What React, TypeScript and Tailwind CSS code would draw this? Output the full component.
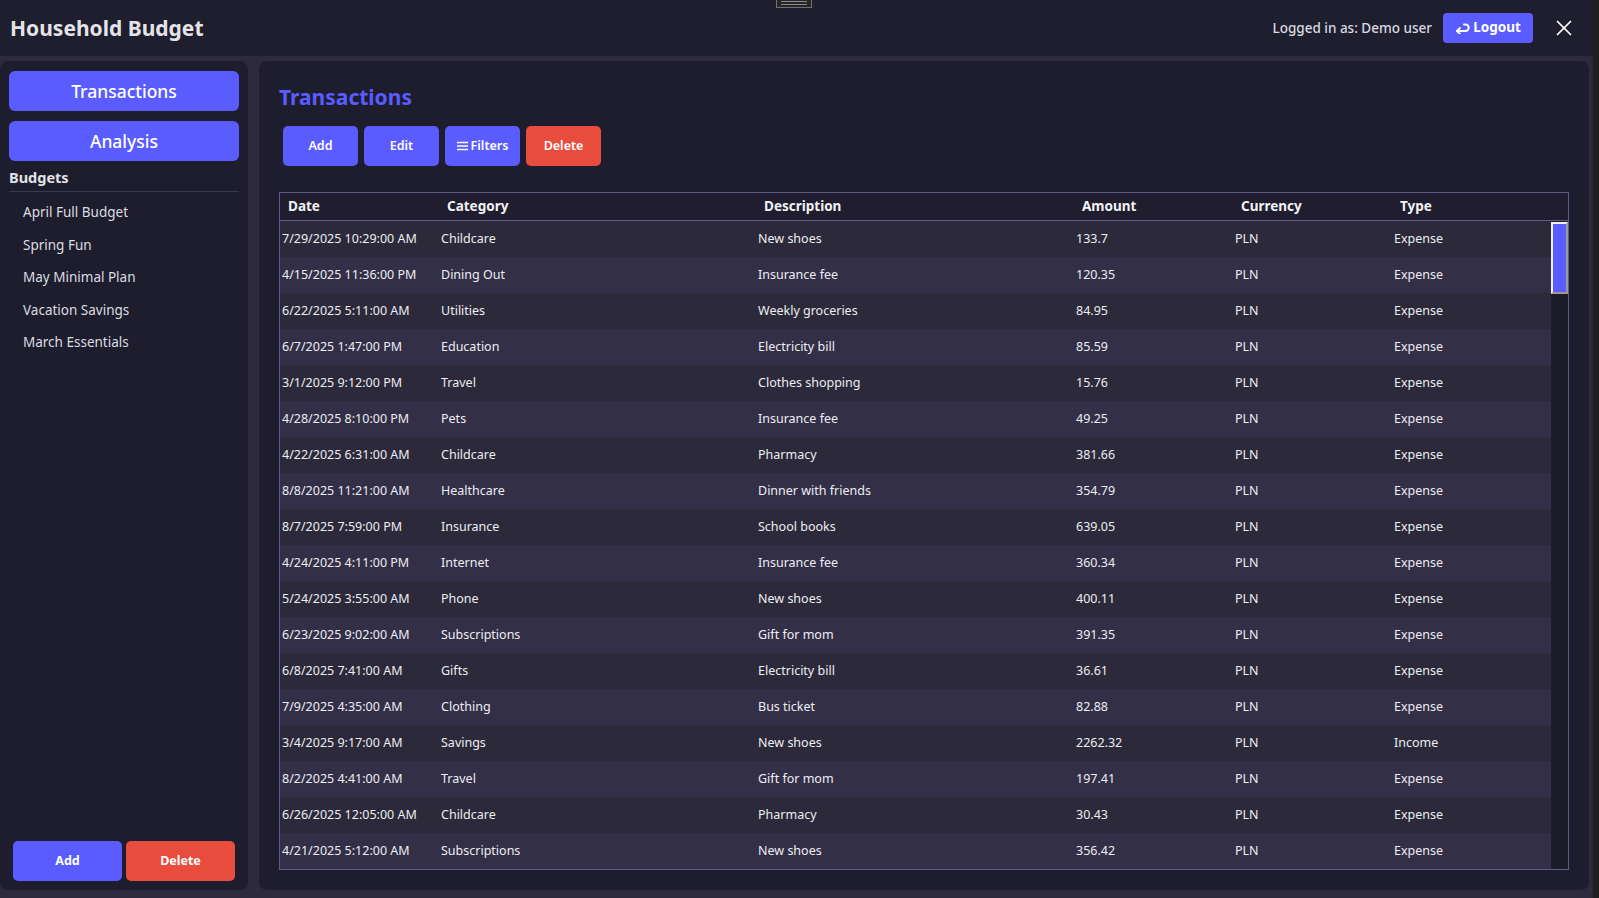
import { X } from 'lucide-react';

const budgets = ['April Full Budget', 'Spring Fun', 'May Minimal Plan', 'Vacation Savings', 'March Essentials'];

const rows: [string, string, string, string, string][] = [
  ['7/29/2025 10:29:00 AM', 'Childcare', 'New shoes', '133.7', 'Expense'],
  ['4/15/2025 11:36:00 PM', 'Dining Out', 'Insurance fee', '120.35', 'Expense'],
  ['6/22/2025 5:11:00 AM', 'Utilities', 'Weekly groceries', '84.95', 'Expense'],
  ['6/7/2025 1:47:00 PM', 'Education', 'Electricity bill', '85.59', 'Expense'],
  ['3/1/2025 9:12:00 PM', 'Travel', 'Clothes shopping', '15.76', 'Expense'],
  ['4/28/2025 8:10:00 PM', 'Pets', 'Insurance fee', '49.25', 'Expense'],
  ['4/22/2025 6:31:00 AM', 'Childcare', 'Pharmacy', '381.66', 'Expense'],
  ['8/8/2025 11:21:00 AM', 'Healthcare', 'Dinner with friends', '354.79', 'Expense'],
  ['8/7/2025 7:59:00 PM', 'Insurance', 'School books', '639.05', 'Expense'],
  ['4/24/2025 4:11:00 PM', 'Internet', 'Insurance fee', '360.34', 'Expense'],
  ['5/24/2025 3:55:00 AM', 'Phone', 'New shoes', '400.11', 'Expense'],
  ['6/23/2025 9:02:00 AM', 'Subscriptions', 'Gift for mom', '391.35', 'Expense'],
  ['6/8/2025 7:41:00 AM', 'Gifts', 'Electricity bill', '36.61', 'Expense'],
  ['7/9/2025 4:35:00 AM', 'Clothing', 'Bus ticket', '82.88', 'Expense'],
  ['3/4/2025 9:17:00 AM', 'Savings', 'New shoes', '2262.32', 'Income'],
  ['8/2/2025 4:41:00 AM', 'Travel', 'Gift for mom', '197.41', 'Expense'],
  ['6/26/2025 12:05:00 AM', 'Childcare', 'Pharmacy', '30.43', 'Expense'],
  ['4/21/2025 5:12:00 AM', 'Subscriptions', 'New shoes', '356.42', 'Expense'],
];

const cols = 'grid grid-cols-[159px_317px_318px_159px_159px_1fr]';

function LogoutIcon() {
  return (
    <svg width="15" height="12" viewBox="0 0 15 12" fill="none" stroke="currentColor" strokeWidth="2" strokeLinecap="round" strokeLinejoin="round">
      <path d="M2 9h8.5a3.2 3.2 0 0 0 0-6.4H9" />
      <path d="M5 6 2 9l3 3" />
    </svg>
  );
}

function FilterIcon() {
  return (
    <svg width="11" height="10" viewBox="0 0 11 10" fill="none" stroke="currentColor" strokeWidth="1.4">
      <path d="M0 1.5h11M0 5h11M0 8.5h11" />
    </svg>
  );
}

export default function App() {
  return (
    <div className="relative flex w-[1599px] h-[898px] overflow-hidden bg-[#1e1e1e] text-[#ecebf2]" style={{ fontFamily: '"Segoe UI", "Noto Sans", sans-serif' }}>
      {/* top-center drag handle */}
      <div className="absolute left-[776px] top-[-2px] w-[36px] h-[10px] border border-[#707070] bg-[#262626] flex flex-col justify-center gap-[2px] px-[4px]">
        <div className="h-px bg-[#8a8a8a]" />
        <div className="h-px bg-[#8a8a8a]" />
      </div>

      <div className="flex flex-col w-[1593px] h-full">
        {/* Header */}
        <header className="h-[56px] flex items-center bg-[#1f1e2e] pl-[10px] pr-[16px] pb-[1px]">
          <h1 className="text-[21px] font-bold text-[#e4e4e8] mt-[2px]">Household Budget</h1>
          <div className="ml-auto flex items-center">
            <span className="text-[13.5px] font-medium text-[#d9d9e0] mr-[11px] mt-[1px]">Logged in as: Demo user</span>
            <button className="flex items-center gap-[3px] h-[30px] w-[90px] justify-center rounded-[4px] bg-[#5a5cff] text-white text-[13.5px] font-bold">
              <LogoutIcon />
              Logout
            </button>
            <X size={26} strokeWidth={1.6} className="ml-[18px] text-white" />
          </div>
        </header>

        {/* Body */}
        <div className="flex-1 flex gap-[11px] bg-[#2c2a3c] pt-[5px] pb-[8px] pr-[4px] min-h-0">
          {/* Sidebar */}
          <aside className="w-[248px] flex flex-col bg-[#1e1d2d] rounded-[8px] px-[9px] pt-[10px] pb-[9px]">
            <button className="h-[40px] rounded-[6px] bg-[#5a5cff] text-white text-[17.5px] font-medium">Transactions</button>
            <button className="h-[40px] mt-[10px] rounded-[6px] bg-[#5a5cff] text-white text-[17.5px] font-medium">Analysis</button>
            <div className="mt-[6px] text-[14.5px] font-bold text-[#e2e2e8] pb-[4px] border-b border-[#3a384c] leading-[20px]">Budgets</div>
            <ul className="mt-[4px] flex flex-col">
              {budgets.map((b) => (
                <li key={b} className="h-[32.5px] flex items-center pl-[14px] text-[13.5px] text-[#dcdce2]">{b}</li>
              ))}
            </ul>
            <div className="mt-auto flex gap-[4px] px-[4px]">
              <button className="flex-1 h-[40px] rounded-[5px] bg-[#5a5cff] text-white text-[12.5px] font-bold">Add</button>
              <button className="flex-1 h-[40px] rounded-[5px] bg-[#e84c3d] text-white text-[12.5px] font-bold">Delete</button>
            </div>
          </aside>

          {/* Main panel */}
          <main className="flex-1 flex flex-col bg-[#1e1d2d] rounded-[8px] p-5 min-w-0 min-h-0">
            <h2 className="text-[21px] font-bold text-[#5a5cff] leading-[30px] mt-[1px]">Transactions</h2>
            <div className="flex gap-[6px] mt-[14px] pl-[4px]">
              <button className="w-[75px] h-[40px] rounded-[5px] bg-[#5a5cff] text-white text-[12.5px] font-semibold">Add</button>
              <button className="w-[75px] h-[40px] rounded-[5px] bg-[#5a5cff] text-white text-[12.5px] font-semibold">Edit</button>
              <button className="w-[75px] h-[40px] rounded-[5px] bg-[#5a5cff] text-white text-[12.5px] font-semibold flex items-center justify-center gap-[3px]">
                <FilterIcon />
                Filters
              </button>
              <button className="w-[75px] h-[40px] rounded-[5px] bg-[#e84c3d] text-white text-[12.5px] font-semibold">Delete</button>
            </div>

            {/* Table */}
            <div className="mt-[26px] flex-1 flex flex-col border border-[#5e5b8a] min-h-0">
              <div className={`${cols} h-[28px] items-center border-b border-[#5e5b8a] bg-[#1f1d2e] pr-[17px] text-[13.5px] font-bold text-[#f2f2f5]`}>
                <span className="pl-[8px]">Date</span>
                <span className="pl-[8px]">Category</span>
                <span className="pl-[8px]">Description</span>
                <span className="pl-[8px]">Amount</span>
                <span className="pl-[8px]">Currency</span>
                <span className="pl-[8px]">Type</span>
              </div>
              <div className="flex-1 flex min-h-0">
                <div className="flex-1 overflow-hidden">
                  {rows.map((r, i) => (
                    <div key={i} className={`${cols} h-[36px] items-center text-[12.5px] text-[#ededf2] ${i % 2 === 0 ? 'bg-[#2b293a]' : 'bg-[#332f47]'}`}>
                      <span className="pl-[2px] whitespace-nowrap">{r[0]}</span>
                      <span className="pl-[2px]">{r[1]}</span>
                      <span className="pl-[2px]">{r[2]}</span>
                      <span className="pl-[2px]">{r[3]}</span>
                      <span className="pl-[2px]">PLN</span>
                      <span className="pl-[2px]">{r[4]}</span>
                    </div>
                  ))}
                </div>
                <div className="w-[17px] bg-[#1c1b29] pt-px">
                  <div className="h-[72px] bg-[#5a5cff] border-2 border-t-[#f0f0f0] border-l-[#f0f0f0] border-r-[#9a9a9a] border-b-[#9a9a9a]" />
                </div>
              </div>
            </div>
          </main>
        </div>
      </div>
      <div className="flex-1 bg-[#1e1e1e]" />
    </div>
  );
}
